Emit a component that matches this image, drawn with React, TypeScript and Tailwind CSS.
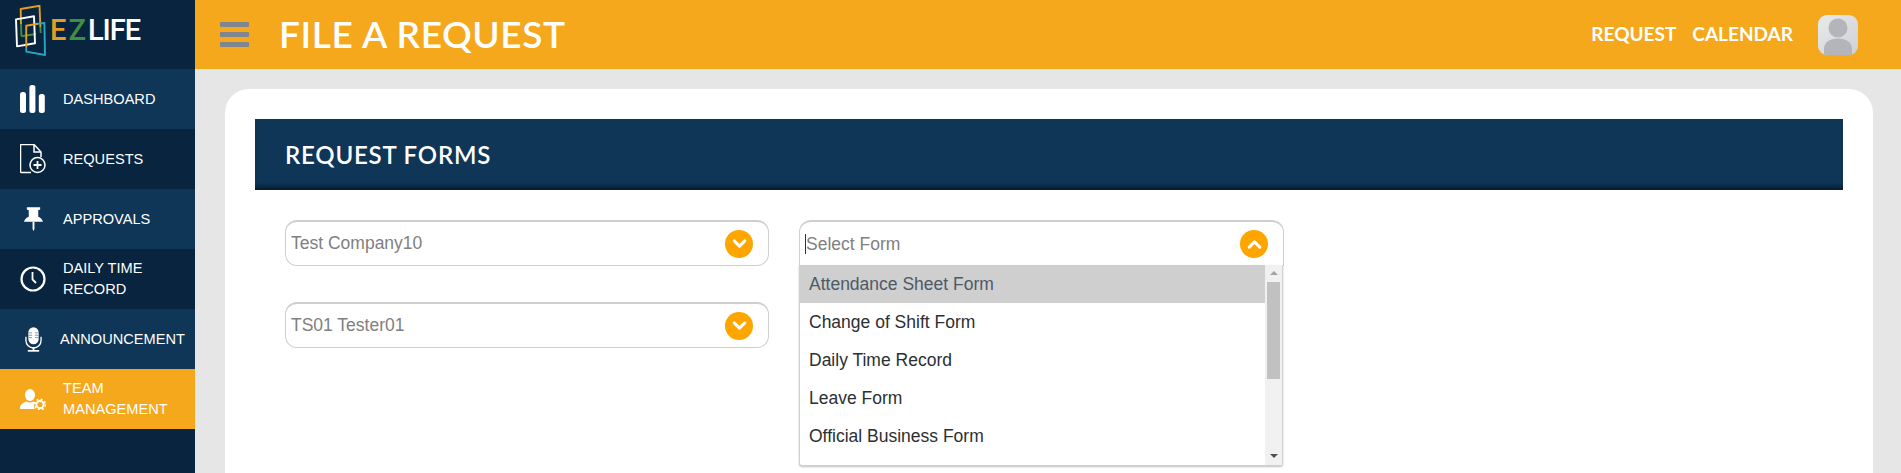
import React from 'react';
import { ChevronDown, ChevronUp } from 'lucide-react';

const heading = { fontFamily: 'Lato, sans-serif' };

function DashboardIcon() {
  return (
    <svg width="26" height="28" viewBox="0 0 26 28" fill="white">
      <rect x="0" y="7" width="6" height="21" rx="2.5" />
      <rect x="9.400" y="0" width="6" height="28" rx="2.5" />
      <rect x="18.800" y="9" width="6" height="19" rx="2.5" />
    </svg>
  );
}

function RequestsIcon() {
  return (
    <svg width="26" height="30" viewBox="0 0 26 30" fill="none" stroke="white" strokeWidth="1.500">
      <path d="M11 28.500H1.500a1 1 0 0 1-1-1V1.500a1 1 0 0 1 1-1H14l7 7.500v5" />
      <path d="M14 .5V8h7" />
      <circle cx="17.500" cy="21" r="7.500" />
      <path d="M17.500 17v8M13.500 21h8" strokeWidth="1.800" />
    </svg>
  );
}

function PinIcon() {
  return (
    <svg width="19" height="24" viewBox="0 0 20 25" fill="white">
      <path d="M3 0h14v2.500l-2 .8V10c2.500 1 4.500 2.800 5 5.500H0C.5 12.800 2.500 11 5 10V3.300l-2-.8z" />
      <path d="M9 15.500h2V23l-1 2-1-2z" />
    </svg>
  );
}

function ClockIcon() {
  return (
    <svg width="26" height="26" viewBox="0 0 26 26" fill="none" stroke="white">
      <circle cx="13" cy="13" r="11.500" strokeWidth="2.200" />
      <path d="M12.500 6v7.500l3.500 3.500" strokeWidth="1.800" />
    </svg>
  );
}

function MicIcon() {
  return (
    <svg width="17" height="25" viewBox="0 0 18 26" fill="none" stroke="white">
      <rect x="3.500" y="0" width="11" height="18" rx="5.500" fill="white" stroke="none" />
      <path d="M3.500 6h4M10.500 6h4M3.500 8.500h4M10.500 8.500h4M3.500 11h4M10.500 11h4" stroke="#7f93a8" strokeWidth="1" />
      <path d="M1 10v4a8 8 0 0 0 16 0v-4" strokeWidth="1.400" />
      <path d="M9 21v3" strokeWidth="2" />
      <path d="M3 25h12" strokeWidth="1.800" />
    </svg>
  );
}

function TeamIcon() {
  return (
    <svg width="26" height="21" viewBox="0 0 26 21" fill="white">
      <ellipse cx="10" cy="6" rx="5" ry="6" />
      <path d="M0 20c0-4 2-6 6.500-7.500 2 1.300 5 1.300 7 0 .8.300 1.500.6 2 1-2 1.700-2.200 4.500-.7 6.500z" />
      <circle cx="20" cy="15.500" r="3.600" fill="none" stroke="white" strokeWidth="2" />
      <circle cx="20" cy="15.500" r="5.300" fill="none" stroke="white" strokeWidth="1.600" strokeDasharray="2 2.160" />
    </svg>
  );
}

function Logo() {
  return (
    <div className="h-[69px] flex items-start pl-[15px] bg-[#08243f]">
      {/* viewBox is in page pixels so the strokes can be read straight off the reference */}
      <svg width="32" height="52" viewBox="15 5 32 52" fill="none" strokeWidth="1.900" strokeLinejoin="round" className="shrink-0 mt-[5px]">
        <path d="M21 24L20.700 9L39.500 5.800L40.400 27" stroke="#e39f22" />
        <path d="M21 24L21.400 36.200M40.400 27L40.700 33" stroke="#3f8f3f" />
        <path d="M21.400 36.200L36 34" stroke="#3f8f3f" />
        <path d="M16 19.400L34 16.300L35 43.200L17 46.400Z" stroke="white" />
        <path d="M26.300 47L26.300 51.600L45 55L44.400 23L38 23.700" stroke="#27a7c4" />
        <path d="M26.300 47L26.200 25.800L38 23.700" stroke="#e39f22" />
      </svg>
      <span className="ml-[3px] mt-[15px] text-[29px] font-medium leading-[30px] whitespace-nowrap" style={{ fontFamily: 'Roboto, sans-serif' }}>
        <span className="text-[#e39f22]">E</span>
        <span className="text-[#3f8f3f] ml-[2px]">Z</span>
        <span className="text-white ml-[2px] tracking-[-1px]">LIFE</span>
      </span>
    </div>
  );
}

const navItems = [
  { label: ['DASHBOARD'], icon: <DashboardIcon />, bg: 'bg-[#0f3557]', textX: 'pl-[17px]' },
  { label: ['REQUESTS'], icon: <RequestsIcon />, bg: 'bg-[#08243f]', textX: 'pl-[17px]' },
  { label: ['APPROVALS'], icon: <PinIcon />, bg: 'bg-[#0f3557]', textX: 'pl-[17px]' },
  { label: ['DAILY TIME', 'RECORD'], icon: <ClockIcon />, bg: 'bg-[#08243f]', textX: 'pl-[17px]' },
  { label: ['ANNOUNCEMENT'], icon: <MicIcon />, bg: 'bg-[#0f3557]', textX: 'pl-[14px]' },
  { label: ['TEAM', 'MANAGEMENT'], icon: <TeamIcon />, bg: 'bg-[#f6a81c]', textX: 'pl-[17px]' },
];

function Sidebar() {
  return (
    <aside className="w-[195px] shrink-0 bg-[#08243f] flex flex-col">
      <Logo />
      {navItems.map((item) => (
        <div key={item.label[0]} className={`h-[60px] flex items-center pl-[20px] ${item.bg}`}>
          <div className="w-[26px] flex justify-center shrink-0">{item.icon}</div>
          <div className={`${item.textX} text-white text-[14.600px] leading-[21px]`} style={{ fontFamily: '"Liberation Sans", sans-serif' }}>
            {item.label.map((line) => (
              <div key={line} className="whitespace-nowrap">{line}</div>
            ))}
          </div>
        </div>
      ))}
    </aside>
  );
}

function Header() {
  return (
    <header className="h-[69px] shrink-0 bg-[#f6a81c] flex items-center pl-[25px] pr-[43px]" style={heading}>
      <div className="flex flex-col gap-[5px] w-[29px] -mt-[1px]">
        <span className="h-[5px] bg-[#7f868f] rounded-[1px]" />
        <span className="h-[5px] bg-[#7f868f] rounded-[1px]" />
        <span className="h-[5px] bg-[#7f868f] rounded-[1px]" />
      </div>
      <h1 className="ml-[30px] -mt-[2px] text-white text-[37px] font-semibold leading-none tracking-[0.6px]">FILE A REQUEST</h1>
      <div className="ml-auto flex items-center text-white text-[19px] font-bold">
        <span>REQUEST</span>
        <span className="ml-[16px]">CALENDAR</span>
        <div className="ml-[25px] w-[40px] h-[40px] rounded-[9px] overflow-hidden bg-gradient-to-br from-[#e9eaec] to-[#cfd0d4]">
          <svg width="40" height="40" viewBox="0 0 40 40" fill="#b4b5ba">
            <circle cx="20" cy="13" r="9.500" />
            <path d="M6 40v-6c0-7 6-10.500 14-10.500S34 27 34 34v6z" />
          </svg>
        </div>
      </div>
    </header>
  );
}

function Toggle({ open }: { open?: boolean }) {
  return (
    <span className="w-[28px] h-[28px] rounded-full bg-[#ffa500] flex items-center justify-center shrink-0 text-white">
      {open ? <ChevronUp size={21} strokeWidth={3.500} /> : <ChevronDown size={21} strokeWidth={3.500} />}
    </span>
  );
}

function SelectBox({ value }: { value: string }) {
  return (
    <div className="h-[46px] w-[484px] border border-[#cfcfcf] border-t-2 rounded-[12px] flex items-center pl-[5px] pr-[15px] justify-between">
      <span className="text-[17.500px] text-[#80807f] -mt-[1px]">{value}</span>
      <Toggle />
    </div>
  );
}

const forms = ['Attendance Sheet Form', 'Change of Shift Form', 'Daily Time Record', 'Leave Form', 'Official Business Form'];

function FormPicker() {
  return (
    <div className="relative w-[485px]">
      <div className="h-[46px] border border-[#cfcfcf] border-t-2 border-b-0 rounded-t-[12px] flex items-center pl-[5px] pr-[15px] justify-between">
        <span className="text-[17.500px] text-[#80807f] border-l border-[#333] leading-[20px]">Select Form</span>
        <Toggle open />
      </div>
      <div className="absolute left-0 top-[45px] w-[484px] h-[201px] bg-white border border-[#d0d0d0] border-t-0 rounded-b-[3px] shadow-[0_1px_2px_rgba(0,0,0,0.25)] flex">
        <ul className="flex-1">
          {forms.map((form, i) => (
            <li
              key={form}
              className={`h-[38px] pl-[9px] flex items-center text-[17.500px] ${i === 0 ? 'bg-[#cfcfcf] text-[#4d5a66]' : 'text-[#2b2f33]'}`}
            >
              {form}
            </li>
          ))}
        </ul>
        <div className="w-[17px] bg-[#f1f1f1] flex flex-col items-center relative pt-[17px]">
          <span className="absolute top-[6px] w-0 h-0 border-x-[4px] border-x-transparent border-b-[4px] border-b-[#a3a3a3]" />
          <div className="w-[13px] h-[97px] bg-[#c1c1c1]" />
          <span className="absolute bottom-[7px] w-0 h-0 border-x-[4px] border-x-transparent border-t-[4px] border-t-[#505050]" />
        </div>
      </div>
    </div>
  );
}

export default function App() {
  return (
    <div className="w-[1901px] h-[473px] overflow-hidden flex" style={{ fontFamily: '"Liberation Sans", sans-serif' }}>
      <Sidebar />
      <div className="flex-1 flex flex-col min-w-0">
        <Header />
        <main className="flex-1 bg-[#e6e6e6] pt-[20px] pl-[30px] pr-[28px]">
          <div className="bg-white rounded-t-[24px] h-full pt-[30px] px-[30px]">
            <div className="h-[71px] bg-[#0f3557] flex items-center pl-[30px] shadow-[inset_0_-6px_5px_-3px_rgba(0,0,0,0.55)]">
              <h2 className="text-white text-[24px] font-semibold tracking-[0.8px]" style={heading}>REQUEST FORMS</h2>
            </div>
            <div className="pt-[30px] pl-[30px] flex gap-[30px]">
              <div className="flex flex-col gap-[36px]">
                <SelectBox value="Test Company10" />
                <SelectBox value="TS01 Tester01" />
              </div>
              <FormPicker />
            </div>
          </div>
        </main>
      </div>
    </div>
  );
}
